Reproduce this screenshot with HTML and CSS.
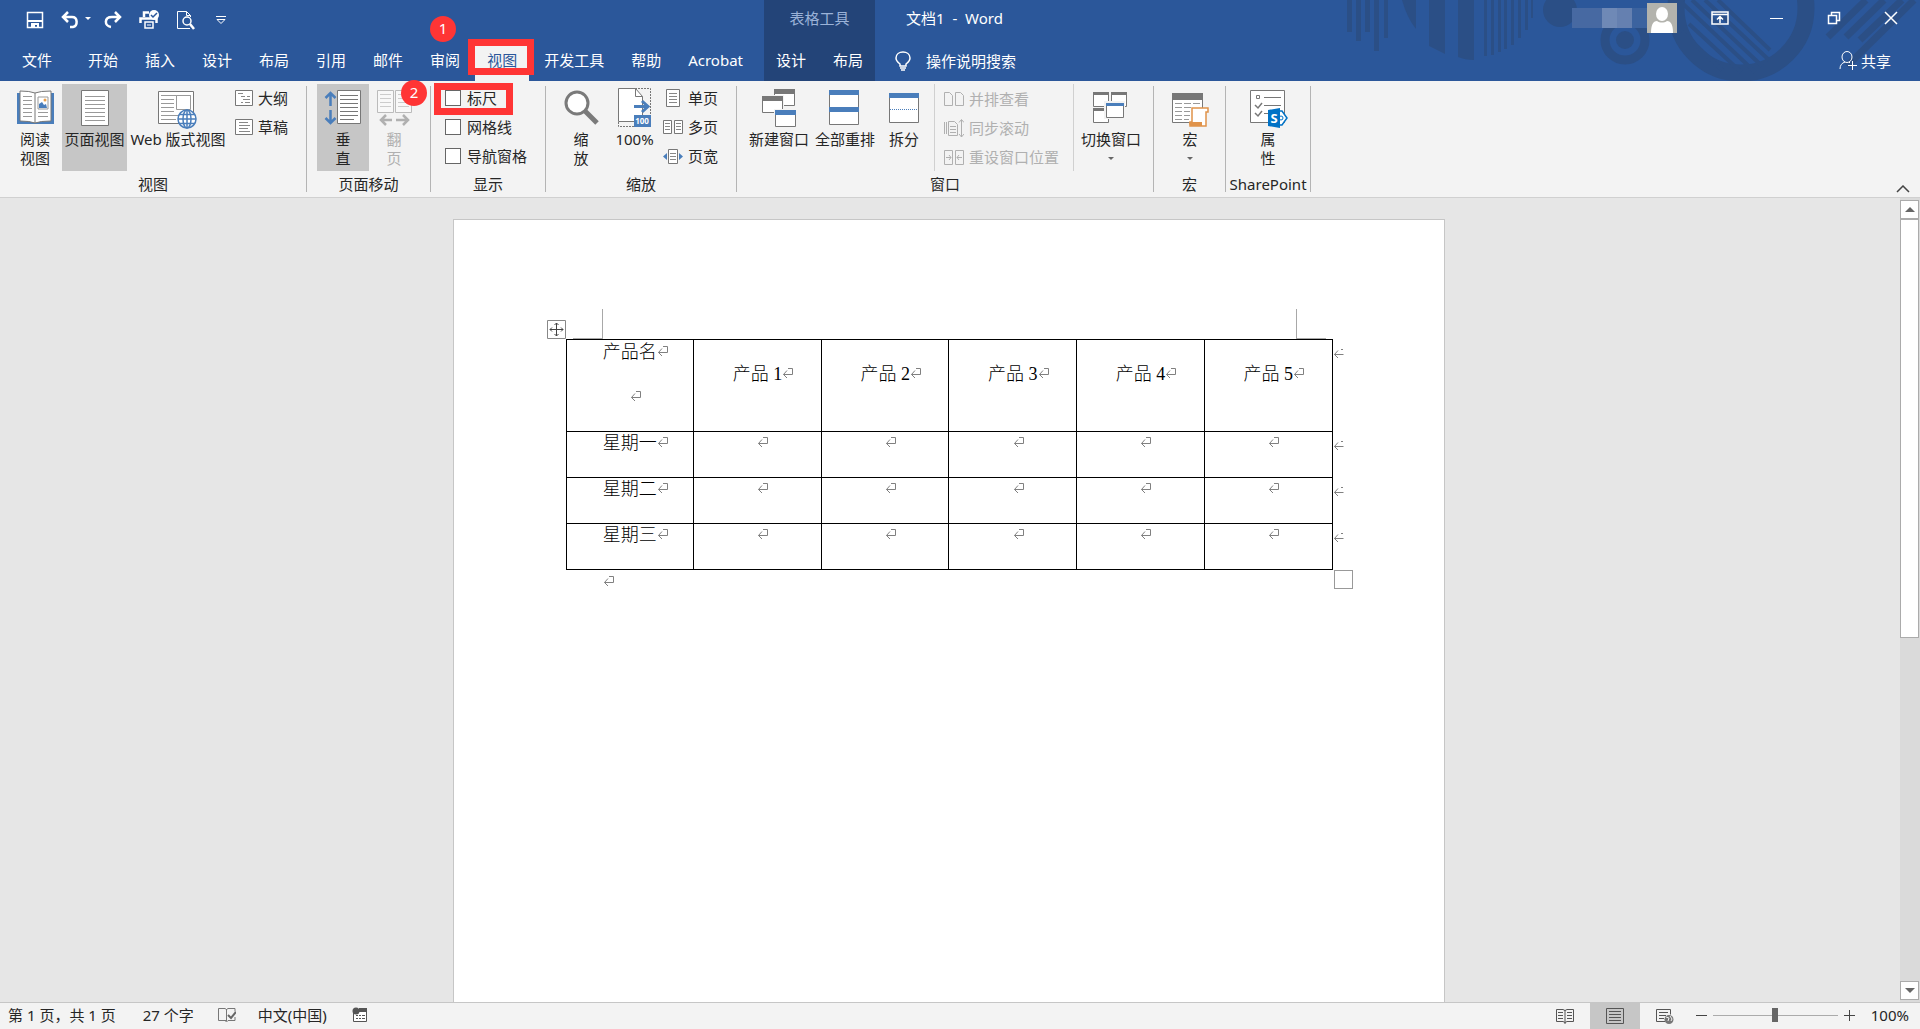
FILE: index.html
```
<!DOCTYPE html>
<html lang="zh-CN">
<head>
  <title>文档1 - Word</title>
  <meta charset="UTF-8">
  <meta name="viewport" content="width=device-width, initial-scale=1.0">
  <link rel="stylesheet" href="styles.css">
</head>
<body>

  <!-- shared symbols -->
  <svg class="symbols" width="0" height="0">
    <symbol id="mark" viewBox="0 0 12 12">
      <path d="M6 .5h4.500v6H1.500M5 2.500l-3.500 4 3.500 3.500" fill="none" stroke="#808080"/>
    </symbol>
    <symbol id="mark-end" viewBox="0 0 12 12">
      <path d="M8 1.500h2M1.500 6.500h9M5 2.500l-3.500 4 3.500 3.500" fill="none" stroke="#808080"/>
    </symbol>
  </svg>

  <header class="header">
    <svg class="art" width="580" height="81" viewBox="0 0 580 81">
      <g fill="#2b4f86">
        <path d="M7 0h5v32H7zM16 0h5v41h-5zM25 0h5v32h-5zM34 0h5v51h-5zM44 0h4v38h-4z"/>
        <path d="M62 0h14v29Q67 18 62 0z"/>
        <path d="M89 0h16v54l-16-8zM118 0h16v60q-9 0-16-3z"/>
        <path d="M144 0h3v56h-3zM151 0h3v55h-3zM158 0h3v52h-3zM164 0h3v49h-3zM171 0h3v45h-3zM178 0h3v38h-3zM185 0h3v30h-3zM191 0h2v18h-2z"/>
        <circle cx="220" cy="10" r="17"/>
        <circle cx="285" cy="40" r="9"/>
      </g>
      <g fill="none" stroke="#2b4f86">
        <circle cx="285" cy="40" r="20" stroke-width="9"/>
        <circle cx="401" cy="8" r="65" stroke-width="17"/>
        <path d="M339 0l76 72M352 0l70 66M365 0l64 60M349 24l52 48M378 0l52 50M342 32l40 38" stroke-width="4"/>
        <path d="M488 37l38-37M506 37l38-37M520 40l42-40M507 66l67-66" stroke-width="7"/>
      </g>
    </svg>

    <div class="header-main">
      <div class="quick">
        <button class="quick-btn save" aria-label="保存"><svg width="18" height="18" viewBox="0 0 18 18"><path d="M1.500 1.500h15v15h-15z" fill="none" stroke="#fff" stroke-width="1.500"/><path d="M2 9h14v2H2zM5 12h8v5h-2v-3H9v3H5z" fill="#fff"/></svg></button>
        <button class="quick-btn undo" aria-label="撤消"><svg width="30" height="18" viewBox="0 0 30 18"><path d="M2 6h9c6 0 6 9 1 10H9M7 1L2 6l5 5" fill="none" stroke="#fff" stroke-width="2.500"/><path d="M24 6h6l-3 3z" fill="#fff"/></svg></button>
        <button class="quick-btn redo" aria-label="恢复"><svg width="18" height="18" viewBox="0 0 18 18"><path d="M16 6H8C0 6 0 15 7 16M11 1l5 5-5 5" fill="none" stroke="#fff" stroke-width="2.500"/></svg></button>
        <button class="quick-btn print" aria-label="快速打印"><svg width="20" height="20" viewBox="0 0 20 20"><path d="M5 7V2.500h5M1.500 13V8.500h16V13" fill="none" stroke="#fff" stroke-width="2.500"/><path d="M6 12h8v6H6z" fill="#2b579a" stroke="#fff" stroke-width="1.500"/><path d="M8 15h4" stroke="#fff"/><circle cx="15" cy="5" r="5" fill="#fff"/><path d="M12 5l2 2 4-4" fill="none" stroke="#2b579a" stroke-width="1.500"/></svg></button>
        <button class="quick-btn preview" aria-label="打印预览"><svg width="20" height="20" viewBox="0 0 20 20"><path d="M14 18.500H1.500v-17h9l4 4V7M10.500 1.500v4h4" fill="none" stroke="#fff"/><circle cx="11" cy="11" r="4" fill="#2b579a" stroke="#fff" stroke-width="1.500"/><path d="M14 14l4 5" stroke="#fff" stroke-width="2.500"/></svg></button>
        <button class="quick-btn more" aria-label="自定义快速访问工具栏"><svg width="10" height="8" viewBox="0 0 10 8"><path d="M0 .5h10M1 3.500h8L5 7.500z" fill="none" stroke="#fff"/></svg></button>
      </div>
      <nav class="tabs">
        <a class="tab file" href="#">文件</a>
        <a class="tab" href="#">开始</a>
        <a class="tab" href="#">插入</a>
        <a class="tab" href="#">设计</a>
        <a class="tab" href="#">布局</a>
        <a class="tab" href="#">引用</a>
        <a class="tab" href="#">邮件</a>
        <a class="tab" href="#">审阅</a>
        <a class="tab active" href="#">视图<span class="box box-tab"></span><span class="badge badge-one">1</span></a>
        <a class="tab" href="#">开发工具</a>
        <a class="tab" href="#">帮助</a>
        <a class="tab" href="#">Acrobat</a>
      </nav>
    </div>

    <div class="header-context">
      <div class="context-title">表格工具</div>
      <nav class="tabs">
        <a class="tab" href="#">设计</a>
        <a class="tab" href="#">布局</a>
      </nav>
    </div>

    <div class="header-side">
      <div class="title-row">
        <h1 class="title">文档1 &nbsp;-&nbsp; Word</h1>
        <div class="user">
          <div class="user-name"><i></i><i></i><i></i><i></i><i></i></div>
          <svg class="avatar" width="30" height="30" viewBox="0 0 30 30"><path d="M0 0h30v30H0z" fill="#b3b3ad"/><ellipse cx="15" cy="11" rx="6" ry="7" fill="#fff"/><path d="M4 30c0-8 2-12 6-12 3 2 7 2 10 0 4 0 6 4 6 12z" fill="#fff"/></svg>
        </div>
        <button class="win-btn" aria-label="功能区显示选项"><svg width="18" height="14" viewBox="0 0 18 14"><path d="M1 1h16v12H1zM1 3.500h16M9 12V6M6 8.500l3-3 3 3" fill="none" stroke="#fff" stroke-width="1.500"/></svg></button>
        <button class="win-btn" aria-label="最小化"><svg width="14" height="14" viewBox="0 0 14 14"><path d="M0 7.500h13" stroke="#fff"/></svg></button>
        <button class="win-btn" aria-label="还原"><svg width="14" height="14" viewBox="0 0 14 14"><path d="M1.500 4.500h8v8h-8zM4.500 4V1.500h8v8H10" fill="none" stroke="#fff" stroke-width="1.500"/></svg></button>
        <button class="win-btn" aria-label="关闭"><svg width="14" height="14" viewBox="0 0 14 14"><path d="M1 1l12 12M13 1L1 13" stroke="#fff" stroke-width="1.500"/></svg></button>
      </div>
      <div class="tell-row">
        <button class="tell"><svg width="16" height="20" viewBox="0 0 16 20"><path d="M5 15v-2C1 10 1 8 1 7c0-8 14-8 14 0 0 1 0 3-4 6v2z" fill="none" stroke="#fff" stroke-width="1.500"/><path d="M5 17h6M6 19h4" stroke="#fff" stroke-width="1.500"/></svg>操作说明搜索</button>
        <button class="share"><svg width="18" height="19" viewBox="0 0 18 19"><ellipse cx="8" cy="6" rx="5" ry="5.500" fill="none" stroke="#fff"/><path d="M1 18c0-4 2-6 5-7M10 11l1 1M9 14.500h9M13.500 10v9" fill="none" stroke="#fff"/></svg>共享</button>
      </div>
    </div>
  </header>

  <div class="ribbon">
    <section class="group group-views">
      <div class="tools">
        <button class="big read"><svg width="40" height="42" viewBox="0 0 40 42"><path d="M2 5h37v31H2z" fill="#4a7ebb"/><path d="M5 3q10 0 15 2 5-2 16-2v30q-11 0-16 2-5-2-15-2z" fill="#fff" stroke="#777"/><path d="M20 5v30" stroke="#777"/><path d="M8 8.500h9M8 12.500h9M8 16.500h9M8 20.500h9M8 24.500h9M8 28.500h9M23 24.500h10M23 28.500h10" stroke="#999"/><path d="M23 9h10v12H23z" fill="#fff" stroke="#999"/><path d="M24 20v-4l3-2 2 3 2-1 1 4z" fill="#4a7ebb"/><circle cx="30" cy="12" r="1.500" fill="#e9a04c"/></svg><span>阅读<br>视图</span></button>
        <button class="big page-view on"><svg width="40" height="42" viewBox="0 0 40 42"><path d="M6.500 2.500h27v35h-27z" fill="#fff" stroke="#777"/><path d="M10 8.500h20M10 12.500h20M10 16.500h20M10 20.500h20M10 24.500h20M10 28.500h20M10 32.500h20" stroke="#999"/></svg><span>页面视图</span></button>
        <button class="big web"><svg width="40" height="42" viewBox="0 0 40 42"><path d="M.5 3.500h35v32H.5z" fill="#fff" stroke="#777"/><path d="M3 7.500h30M3 11.500h13M3 15.500h13M3 19.500h13M3 23.500h13M3 27.500h17M3 31.500h15" stroke="#999"/><path d="M18.500 7.500h14v14h-14z" fill="#fff" stroke="#999"/><g fill="#fff" stroke="#4a7ebb" stroke-width="1.500"><circle cx="29" cy="31" r="9"/><ellipse cx="29" cy="31" rx="4" ry="9"/><path d="M20 31h18M21 26.500h16M21 35.500h16M29 22v18" fill="none"/></g></svg><span>Web 版式视图</span></button>
        <div class="smalls">
          <button class="small"><svg width="18" height="16" viewBox="0 0 18 16"><path d="M.5.5h17v15H.5z" fill="#fff" stroke="#777"/><path d="M3 3.500h5M6 6.500h4M12 6.500h3M8 9.500h7M6 12.500h2M10 12.500h5" stroke="#888"/></svg>大纲</button>
          <button class="small"><svg width="18" height="16" viewBox="0 0 18 16"><path d="M.5.5h17v15H.5z" fill="#fff" stroke="#777"/><path d="M4 3.500h9M4 6.500h11M4 9.500h9M4 12.500h11" stroke="#888"/></svg>草稿</button>
        </div>
      </div>
      <h2 class="group-label">视图</h2>
    </section>

    <section class="group group-move">
      <div class="tools">
        <button class="big on vertical"><svg width="40" height="42" viewBox="0 0 40 42"><path d="M7.500 5v13M2.500 10l5-5 5 5M7.500 22v13M2.500 30l5 5 5-5" fill="none" stroke="#4a7ebb" stroke-width="2.500"/><path d="M14.500 2.500h23v33h-23z" fill="#fff" stroke="#777"/><path d="M17 7.500h18M17 11.500h18M17 15.500h18M17 19.500h18M17 23.500h18M17 27.500h18M17 31.500h14" stroke="#777"/></svg><span>垂<br>直</span></button>
        <button class="big side" disabled><svg width="40" height="42" viewBox="0 0 40 42"><path d="M3.500 2.500h16v22h-16zM21.500 2.500h16v22h-16z" fill="#f8f8f8" stroke="#bbb"/><path d="M6 6.500h11M6 10.500h11M6 14.500h11M6 18.500h11M24 6.500h11M24 10.500h11M24 14.500h11M24 18.500h11" stroke="#ccc"/><path d="M18 32H7M12 27l-5 5 5 5M22 32h12M29 27l5 5-5 5" fill="none" stroke="#b0b0b0" stroke-width="2.500"/></svg><span>翻<br>页</span></button>
      </div>
      <h2 class="group-label">页面移动</h2>
    </section>

    <section class="group group-show">
      <div class="tools">
        <div class="smalls">
          <label class="small check"><input type="checkbox">标尺<span class="box box-ruler"></span><span class="badge badge-two">2</span></label>
          <label class="small check"><input type="checkbox">网格线</label>
          <label class="small check"><input type="checkbox">导航窗格</label>
        </div>
      </div>
      <h2 class="group-label">显示</h2>
    </section>

    <section class="group group-zoom">
      <div class="tools">
        <button class="big zoom"><svg width="40" height="42" viewBox="0 0 40 42"><path d="M24 23l12 12" stroke="#7a7a7a" stroke-width="5"/><circle cx="16" cy="15" r="11" fill="#fff" stroke="#7a7a7a" stroke-width="3"/></svg><span>缩<br>放</span></button>
        <button class="big full"><svg width="40" height="42" viewBox="0 0 40 42"><path d="M20 .5h15.500V38M3.500 34v4.500H19" fill="none" stroke="#777" stroke-dasharray="2 1"/><path d="M3.500.5h17l7 8v25h-24z" fill="#fff" stroke="#777"/><path d="M20.500.5v8h7" fill="none" stroke="#777"/><path d="M19 18.500h13M27 13l6 5.500-6 5.500" fill="none" stroke="#4a7ebb" stroke-width="3"/><path d="M19 27h17v12H19z" fill="#4a7ebb"/><text x="27" y="36" class="icon-text">100</text></svg><span>100%</span></button>
        <div class="smalls">
          <button class="small"><svg width="20" height="18" viewBox="0 0 20 18"><path d="M3.500.5h13v17h-13z" fill="#fff" stroke="#777"/><path d="M6 4.500h8M6 7.500h8M6 10.500h8M6 13.500h8" stroke="#888"/></svg>单页</button>
          <button class="small"><svg width="20" height="18" viewBox="0 0 20 18"><path d="M.5 2.500h8v13h-8zM11.500 2.500h8v13h-8z" fill="#fff" stroke="#777"/><path d="M2 5.500h5M2 8.500h5M2 11.500h5M13 5.500h5M13 8.500h5M13 11.500h5" stroke="#888"/></svg>多页</button>
          <button class="small"><svg width="20" height="18" viewBox="0 0 20 18"><path d="M5.500 2.500h9v14h-9z" fill="#fff" stroke="#777"/><path d="M7 6.500h6M7 9.500h6M7 12.500h6" stroke="#888"/><path d="M4 6v7L0 9.500zM16 6v7l4-3.500z" fill="#4a7ebb"/></svg>页宽</button>
        </div>
      </div>
      <h2 class="group-label">缩放</h2>
    </section>

    <section class="group group-window">
      <div class="tools">
        <button class="big wide"><svg width="40" height="42" viewBox="0 0 40 42"><path d="M15.500 1.500h20v16h-20z" fill="#fff" stroke="#777"/><path d="M15 1h21v5H15z" fill="#777"/><path d="M2 7h23v20H2z" fill="#f3f3f3"/><path d="M3.500 8.500h20v16h-20z" fill="#fff" stroke="#777"/><path d="M3 8h21v5H3z" fill="#777"/><path d="M15 21h23v18H15z" fill="#f3f3f3"/><path d="M16.500 22.500h20v16h-20z" fill="#fff" stroke="#777"/><path d="M16 22h21v5H16z" fill="#4a7ebb"/></svg><span>新建窗口</span></button>
        <button class="big wide"><svg width="40" height="42" viewBox="0 0 40 42"><path d="M4.500 2.500h29v34h-29z" fill="#fff" stroke="#777"/><path d="M4 2h30v5H4zM4 19h30v5H4z" fill="#4a7ebb"/></svg><span>全部重排</span></button>
        <button class="big"><svg width="40" height="42" viewBox="0 0 40 42"><path d="M5.500 5.500h29v29h-29z" fill="#fff" stroke="#777"/><path d="M5 5h30v5H5z" fill="#4a7ebb"/><path d="M6 21.500h28" stroke="#4a7ebb" stroke-dasharray="1 1"/></svg><span>拆分</span></button>
        <div class="smalls divided">
          <button class="small" disabled><svg width="20" height="18" viewBox="0 0 20 18"><path d="M.5 2.500h5l3 3v10h-8zM11.500 2.500h5l3 3v10h-8z" fill="none" stroke="#b0b0b0"/></svg>并排查看</button>
          <button class="small" disabled><svg width="20" height="18" viewBox="0 0 20 18"><path d="M4.500 2.500h6l3 3v11h-9z" fill="none" stroke="#b0b0b0"/><path d="M.5 3v12M2.500 3v12M6 7.500h6M6 10.500h6M6 13.500h6M17.500 1v17M15 3.500l2.500-3 2.500 3M15 15l2.500 3 2.500-3" fill="none" stroke="#b0b0b0"/></svg>同步滚动</button>
          <button class="small" disabled><svg width="20" height="18" viewBox="0 0 20 18"><path d="M.5 2.500h8v14h-8zM11.500 2.500h8v14h-8zM2 9.500h5M5 7l2 2.500L5 12M18 9.500h-5M15 7l-2 2.500 2 2.500" fill="none" stroke="#b0b0b0"/></svg>重设窗口位置</button>
        </div>
        <button class="big wide"><svg width="40" height="42" viewBox="0 0 40 42"><path d="M2.500 4.500h15v14h-15zM20.500 4.500h15v14h-15zM2.500 20.500h15v14h-15z" fill="#fff" stroke="#777"/><path d="M2 4h16v3H2zM20 4h16v3H20zM2 20h16v3H2z" fill="#777"/><path d="M13 13h21v18H13z" fill="#f3f3f3"/><path d="M15.500 15.500h17v14h-17z" fill="#fff" stroke="#777"/><path d="M15 15h18v3H15z" fill="#4a7ebb"/></svg><span>切换窗口</span><i class="arrow"></i></button>
      </div>
      <h2 class="group-label">窗口</h2>
    </section>

    <section class="group group-macro">
      <div class="tools">
        <button class="big"><svg width="40" height="42" viewBox="0 0 40 42"><path d="M2.500 5.500h30v29h-30z" fill="#fff" stroke="#777"/><path d="M2 5h31v7H2z" fill="#777"/><path d="M5 15.500h7M14 15.500h7M23 15.500h7M5 19.500h7M14 19.500h7M5 23.500h7M14 23.500h6M5 27.500h7M14 27.500h6M5 31.500h7M14 31.500h5" stroke="#999"/><path d="M22 20h16v4h-2v14H20v-4h2z" fill="#fff" stroke="#e0934a" stroke-width="1.500"/><path d="M19 34h13v4H21q-2-1-2-4z" fill="#e0934a"/></svg><span>宏</span><i class="arrow"></i></button>
      </div>
      <h2 class="group-label">宏</h2>
    </section>

    <section class="group group-share">
      <div class="tools">
        <button class="big"><svg width="40" height="42" viewBox="0 0 40 42"><path d="M2.500 2.500h34v32h-34z" fill="#fff" stroke="#777"/><path d="M8.500 7.500h3v3h-3zM16 9.500h17M16 17.500h17M16 25.500h5" fill="none" stroke="#777"/><path d="M7 17l3 3 4-5M7 25l3 3 4-5" fill="none" stroke="#777" stroke-width="1.500"/><path d="M28 23l6 0 5 7-5 7h-6" fill="#fff" stroke="#0072c6" stroke-width="1.500"/><circle cx="33" cy="30" r="2" fill="none" stroke="#0072c6"/><path d="M20 22l12-2v20l-12-2z" fill="#0072c6"/><text x="26" y="35" class="icon-text icon-s">S</text></svg><span>属<br>性</span></button>
      </div>
      <h2 class="group-label">SharePoint</h2>
    </section>

    <button class="collapse" aria-label="折叠功能区"><svg width="14" height="8" viewBox="0 0 14 8"><path d="M1 7l6-6 6 6" fill="none" stroke="#444" stroke-width="1.500"/></svg></button>
  </div>

  <main class="workspace">
    <div class="canvas">
      <article class="page">
        <div class="crops"><i class="crop crop-left"></i><i class="crop crop-right"></i></div>
        <div class="table-wrap">
          <svg class="move-handle" width="19" height="19" viewBox="0 0 19 19"><path d="M.5.5h18v18H.5z" fill="#fff" stroke="#888"/><path d="M9.500 3v13M3 9.500h13M7.500 5l2-2 2 2M7.500 14l2 2 2-2M5 7.500l-2 2 2 2M14 7.500l2 2-2 2" fill="none" stroke="#444"/></svg>
          <table class="doc-table">
            <tr class="head-row">
              <td><p>产品名<svg class="mark"><use href="#mark"/></svg></p><p><svg class="mark"><use href="#mark"/></svg></p></td>
              <td><p>产品 1<svg class="mark"><use href="#mark"/></svg></p></td>
              <td><p>产品 2<svg class="mark"><use href="#mark"/></svg></p></td>
              <td><p>产品 3<svg class="mark"><use href="#mark"/></svg></p></td>
              <td><p>产品 4<svg class="mark"><use href="#mark"/></svg></p></td>
              <td><p>产品 5<svg class="mark"><use href="#mark"/></svg></p></td>
              <td class="end"><svg class="mark"><use href="#mark-end"/></svg></td>
            </tr>
            <tr>
              <td><p>星期一<svg class="mark"><use href="#mark"/></svg></p></td>
              <td><p><svg class="mark"><use href="#mark"/></svg></p></td>
              <td><p><svg class="mark"><use href="#mark"/></svg></p></td>
              <td><p><svg class="mark"><use href="#mark"/></svg></p></td>
              <td><p><svg class="mark"><use href="#mark"/></svg></p></td>
              <td><p><svg class="mark"><use href="#mark"/></svg></p></td>
              <td class="end"><svg class="mark"><use href="#mark-end"/></svg></td>
            </tr>
            <tr>
              <td><p>星期二<svg class="mark"><use href="#mark"/></svg></p></td>
              <td><p><svg class="mark"><use href="#mark"/></svg></p></td>
              <td><p><svg class="mark"><use href="#mark"/></svg></p></td>
              <td><p><svg class="mark"><use href="#mark"/></svg></p></td>
              <td><p><svg class="mark"><use href="#mark"/></svg></p></td>
              <td><p><svg class="mark"><use href="#mark"/></svg></p></td>
              <td class="end"><svg class="mark"><use href="#mark-end"/></svg></td>
            </tr>
            <tr>
              <td><p>星期三<svg class="mark"><use href="#mark"/></svg></p></td>
              <td><p><svg class="mark"><use href="#mark"/></svg></p></td>
              <td><p><svg class="mark"><use href="#mark"/></svg></p></td>
              <td><p><svg class="mark"><use href="#mark"/></svg></p></td>
              <td><p><svg class="mark"><use href="#mark"/></svg></p></td>
              <td><p><svg class="mark"><use href="#mark"/></svg></p></td>
              <td class="end"><svg class="mark"><use href="#mark-end"/></svg></td>
            </tr>
          </table>
          <i class="size-handle"></i>
        </div>
        <p class="last-line"><svg class="mark"><use href="#mark"/></svg></p>
      </article>
    </div>
    <div class="scrollbar">
      <button class="scroll-btn" aria-label="向上滚动"><i class="tri tri-up"></i></button>
      <div class="track"><div class="thumb"></div></div>
      <button class="scroll-btn" aria-label="向下滚动"><i class="tri tri-down"></i></button>
    </div>
  </main>

  <footer class="status">
    <span class="pages">第 1 页，共 1 页</span>
    <span class="words">27 个字</span>
    <svg class="proof" width="18" height="16" viewBox="0 0 18 16"><path d="M8.500 2v12M8 13.500H.5V1.500H7l1.500 1 1.500-1h7v3M17 10v3.500h-7l-1.500 1.500L7 13.500" fill="none" stroke="#777"/><path d="M10 8l3 3 5-6" fill="none" stroke="#666" stroke-width="2"/></svg>
    <span class="lang">中文(中国)</span>
    <svg width="16" height="16" viewBox="0 0 16 16"><path d="M1.500 4.500h13v10h-13z" fill="#fff" stroke="#555"/><path d="M7 1h8v4H7z" fill="#555"/><circle cx="4" cy="4" r="3.500" fill="#555"/><path d="M4 8.500h2M7 8.500h2M10 8.500h3M4 11.500h2M7 11.500h2M10 11.500h3" stroke="#555"/></svg>
    <div class="view-btns">
      <button class="view-btn" aria-label="阅读视图"><svg width="18" height="16" viewBox="0 0 18 16"><path d="M.5 1.500H7l2 1 2-1h6.500v12H11l-2 1-2-1H.5zM9 2v14M2 4.500h5M2 7.500h5M2 10.500h5M11 4.500h5M11 7.500h5M11 10.500h5" fill="none" stroke="#555"/></svg></button>
      <button class="view-btn on" aria-label="页面视图"><svg width="18" height="16" viewBox="0 0 18 16"><path d="M.5.5h17v15H.5zM3 3.500h12M3 6.500h12M3 9.500h12M3 12.500h12" fill="none" stroke="#555"/></svg></button>
      <button class="view-btn" aria-label="Web 版式视图"><svg width="18" height="16" viewBox="0 0 18 16"><path d="M9 13.500H.5V1.500h14v5M3 4.500h9M3 7.500h7M3 10.500h5" fill="none" stroke="#555"/><circle cx="13" cy="11.500" r="4.500" fill="#777"/><path d="M10 9l3 1-1 3M14 8l2 3-1 2" fill="none" stroke="#f3f3f3"/></svg></button>
    </div>
    <button class="zoom-btn" aria-label="缩小"><svg width="11" height="11" viewBox="0 0 11 11"><path d="M0 5.500h11" stroke="#444"/></svg></button>
    <input class="zoom-range" type="range" min="0" max="100" value="50" aria-label="缩放">
    <button class="zoom-btn" aria-label="放大"><svg width="11" height="11" viewBox="0 0 11 11"><path d="M0 5.500h11M5.500 0v11" stroke="#444"/></svg></button>
    <button class="zoom-value">100%</button>
  </footer>

</body>
</html>
```
FILE: styles.css
```
/* Reset styles */
* {
  margin: 0;
  padding: 0;
  box-sizing: border-box;
}

/* Base styles */
body {
  display: flex;
  flex-direction: column;
  height: 100vh;
  overflow: hidden;
  font-family: "Noto Sans", "Noto Sans CJK SC", sans-serif;
  font-size: 15px;
  line-height: 20px;
  color: #262626;
  background-color: #e6e6e6;
}

button {
  font: inherit;
  color: inherit;
  background: none;
  border: none;
  white-space: nowrap;
}

a {
  color: inherit;
  text-decoration: none;
}

svg {
  flex: none;
}

.symbols {
  position: absolute;
}

/* Header */
.header {
  position: relative;
  display: flex;
  height: 81px;
  flex: none;
  background-color: #2b579a;
  color: #fff;
}

.art {
  position: absolute;
  right: 0;
  top: 0;
}

.header-main,
.header-context,
.header-side {
  position: relative;
  display: flex;
  flex-direction: column;
}

.header-main {
  padding-left: 10px;
  padding-right: 9px;
}

.header-context {
  background-color: #234478;
}

.header-side {
  flex: 1;
}

.quick,
.context-title,
.title-row {
  display: flex;
  align-items: center;
  height: 39px;
}

.quick {
  padding-left: 16px;
}

.quick-btn {
  display: flex;
  margin-right: 17px;
}

.undo {
  margin-right: 13px;
}

.preview {
  margin-right: 20px;
}

.context-title,
.title-row {
  padding-bottom: 3px;
}

.context-title {
  justify-content: center;
  color: #9bb3d8;
}

.tabs {
  display: flex;
  gap: 3px;
  height: 42px;
}

.tab {
  position: relative;
  padding: 11px 12px;
  white-space: nowrap;
}

.file {
  margin-right: 9px;
}

.active {
  background-color: #f3f3f3;
  color: #2b579a;
}

.title {
  margin-left: 31px;
  font-size: 15px;
  font-weight: 400;
}

.user {
  display: flex;
  align-items: center;
  margin-left: auto;
  margin-right: 14px;
}

.user-name {
  display: flex;
  height: 20px;
}

.user-name i {
  width: 15px;
  background-color: #4769a2;
}

.user-name i:nth-child(3) {
  background-color: #6f89b6;
}

.user-name i:nth-child(4) {
  background-color: #6580b0;
}

.user-name i:nth-child(5) {
  background-color: #3c639f;
}

.title-row {
  padding-right: 1px;
}

.win-btn {
  display: flex;
  justify-content: center;
  width: 57px;
}

.tell-row {
  display: flex;
  align-items: center;
  justify-content: space-between;
  height: 42px;
  padding: 1px 29px 0 20px;
}

.tell,
.share {
  display: flex;
  align-items: center;
  gap: 15px;
}

.share {
  gap: 4px;
}

/* Ribbon */
.ribbon {
  display: flex;
  flex: none;
  padding-top: 3px;
  height: 117px;
  background-color: #f3f3f3;
  border-bottom: 1px solid #d0d0d0;
}

.group {
  position: relative;
  padding-right: 1px;
}

.group::after {
  content: "";
  position: absolute;
  top: 2px;
  right: 0;
  width: 1px;
  height: 106px;
  background-color: #b4b4b4;
}

.tools {
  display: flex;
  height: 87px;
}

.group-views .tools {
  padding: 0 18px 0 8px;
}

.group-move .tools {
  padding: 0 11px 0 10px;
}

.group-show .tools {
  padding: 0 18px 0 14px;
}

.group-zoom .tools {
  padding: 0 18px 0 10px;
}

.group-window .tools {
  padding: 0 9px;
}

.group-macro .tools {
  padding: 0 9px 0 10px;
}

.group-share .tools {
  padding: 0 16px;
}

.group-label {
  padding-top: 3px;
  font-size: 15px;
  font-weight: 400;
  line-height: 20px;
  text-align: center;
}

.big {
  display: flex;
  flex-direction: column;
  align-items: center;
  width: 52px;
  padding-top: 4px;
  line-height: 19px;
}

.read {
  width: 54px;
}

.page-view {
  width: 65px;
}

.web {
  width: 102px;
  margin-right: 6px;
}

.side,
.zoom {
  width: 50px;
}

.full {
  width: 57px;
}

.wide {
  width: 66px;
}

.on {
  background-color: #c6c6c6;
}

.big:disabled,
.small:disabled {
  color: #b0b0b0;
}

.smalls {
  display: flex;
  flex-direction: column;
  margin-top: -1px;
}

.small {
  display: flex;
  align-items: center;
  gap: 5px;
  height: 29px;
}

.check {
  position: relative;
  gap: 6px;
}

.check input {
  appearance: none;
  width: 16px;
  height: 16px;
  background-color: #fff;
  border: 1px solid #666;
}

.divided {
  margin: 0 4px;
  padding: 0 14px 0 9px;
  border: solid #d0d0d0;
  border-width: 0 1px;
}

.arrow {
  margin-top: 8px;
  border: 3px solid transparent;
  border-top-color: #666;
}

.icon-text {
  font-size: 8px;
  font-weight: 700;
  fill: #fff;
  text-anchor: middle;
}

.icon-s {
  font-size: 13px;
}

.collapse {
  align-self: flex-end;
  display: flex;
  margin-left: auto;
  padding: 0 10px 4px;
}

/* Red step markers */
.box {
  position: absolute;
  z-index: 1;
  border: 7px solid #ff3535;
}

.box-tab {
  top: 0;
  left: -7px;
  right: -5px;
  height: 36px;
}

.box-ruler {
  top: 0;
  left: -11px;
  width: 79px;
  height: 32px;
}

.badge {
  position: absolute;
  z-index: 2;
  width: 26px;
  height: 26px;
  border-radius: 50%;
  background-color: #ff3535;
  color: #fff;
  line-height: 25px;
  text-align: center;
}

.badge-one {
  top: -23px;
  left: -45px;
}

.badge-two {
  top: -3px;
  left: -44px;
}

/* Document */
.workspace {
  display: flex;
  flex: 1;
  min-height: 0;
}

.canvas {
  display: flex;
  justify-content: center;
  flex: 1;
  padding-top: 21px;
  padding-right: 3px;
}

.page {
  width: 992px;
  padding: 89px 110px 0 112px;
  background-color: #fff;
  border: 1px solid #c6c6c6;
  border-bottom: none;
}

.crops {
  display: flex;
  justify-content: space-between;
  padding: 0 8px 0 7px;
}

.crop {
  width: 30px;
  height: 30px;
  border: 0 solid #a8a8a8;
  border-bottom-width: 1px;
}

.crop-left {
  border-right-width: 1px;
}

.crop-right {
  border-left-width: 1px;
}

.table-wrap {
  position: relative;
}

.doc-table {
  width: 100%;
  table-layout: fixed;
  border-collapse: collapse;
  font-family: "Liberation Serif", "Noto Sans CJK SC", serif;
  font-size: 18px;
  font-weight: 300;
  line-height: 23px;
  color: #000;
  text-align: center;
}

.doc-table tr {
  height: 46px;
}

.doc-table .head-row {
  height: 92px;
}

.doc-table td {
  border: 1px solid #000;
}

.doc-table p {
  height: 45px;
}

.doc-table .end {
  width: 0;
  border: none;
  padding-top: 6px;
  vertical-align: top;
  text-align: left;
  line-height: 16px;
}

.mark {
  width: 12px;
  height: 12px;
  margin-right: -12px;
}

.move-handle {
  position: absolute;
  top: -19px;
  left: -19px;
}

.size-handle {
  position: absolute;
  right: -19px;
  bottom: -19px;
  width: 19px;
  height: 19px;
  border: 1px solid #999;
}

.last-line {
  padding: 2px 37px;
}

/* Scrollbar */
.scrollbar {
  display: flex;
  flex-direction: column;
  width: 20px;
  padding: 2px 1px 2px 0;
  background-color: #dadada;
}

.scroll-btn {
  display: flex;
  justify-content: center;
  align-items: center;
  height: 19px;
  background-color: #fff;
  border: 1px solid #ababab;
}

.track {
  flex: 1;
}

.thumb {
  height: 55%;
  background-color: #fff;
  border: 1px solid #ababab;
}

.tri {
  border: 5px solid transparent;
}

.tri-up {
  border-top: none;
  border-bottom-color: #666;
}

.tri-down {
  border-bottom: none;
  border-top-color: #666;
}

/* Status bar */
.status {
  display: flex;
  align-items: center;
  flex: none;
  height: 27px;
  padding: 0 11px 2px 8px;
  background-color: #f3f3f3;
  border-top: 1px solid #c6c6c6;
}

.pages {
  margin-right: 27px;
}

.words {
  margin-right: 24px;
}

.proof {
  margin-right: 22px;
}

.lang {
  margin-right: 25px;
}

.view-btns {
  display: flex;
  align-self: stretch;
  margin-left: auto;
  margin-right: 6px;
  margin-bottom: -2px;
}

.view-btn {
  display: flex;
  justify-content: center;
  align-items: center;
  width: 50px;
}

.zoom-btn {
  display: flex;
}

.zoom-range {
  appearance: none;
  width: 125px;
  height: 16px;
  margin: 0 6px;
  background: linear-gradient(#ababab, #ababab) center / 100% 1px no-repeat;
}

.zoom-range::-webkit-slider-thumb {
  appearance: none;
  width: 6px;
  height: 14px;
  background-color: #666;
}

.zoom-value {
  margin-left: 16px;
}
```
